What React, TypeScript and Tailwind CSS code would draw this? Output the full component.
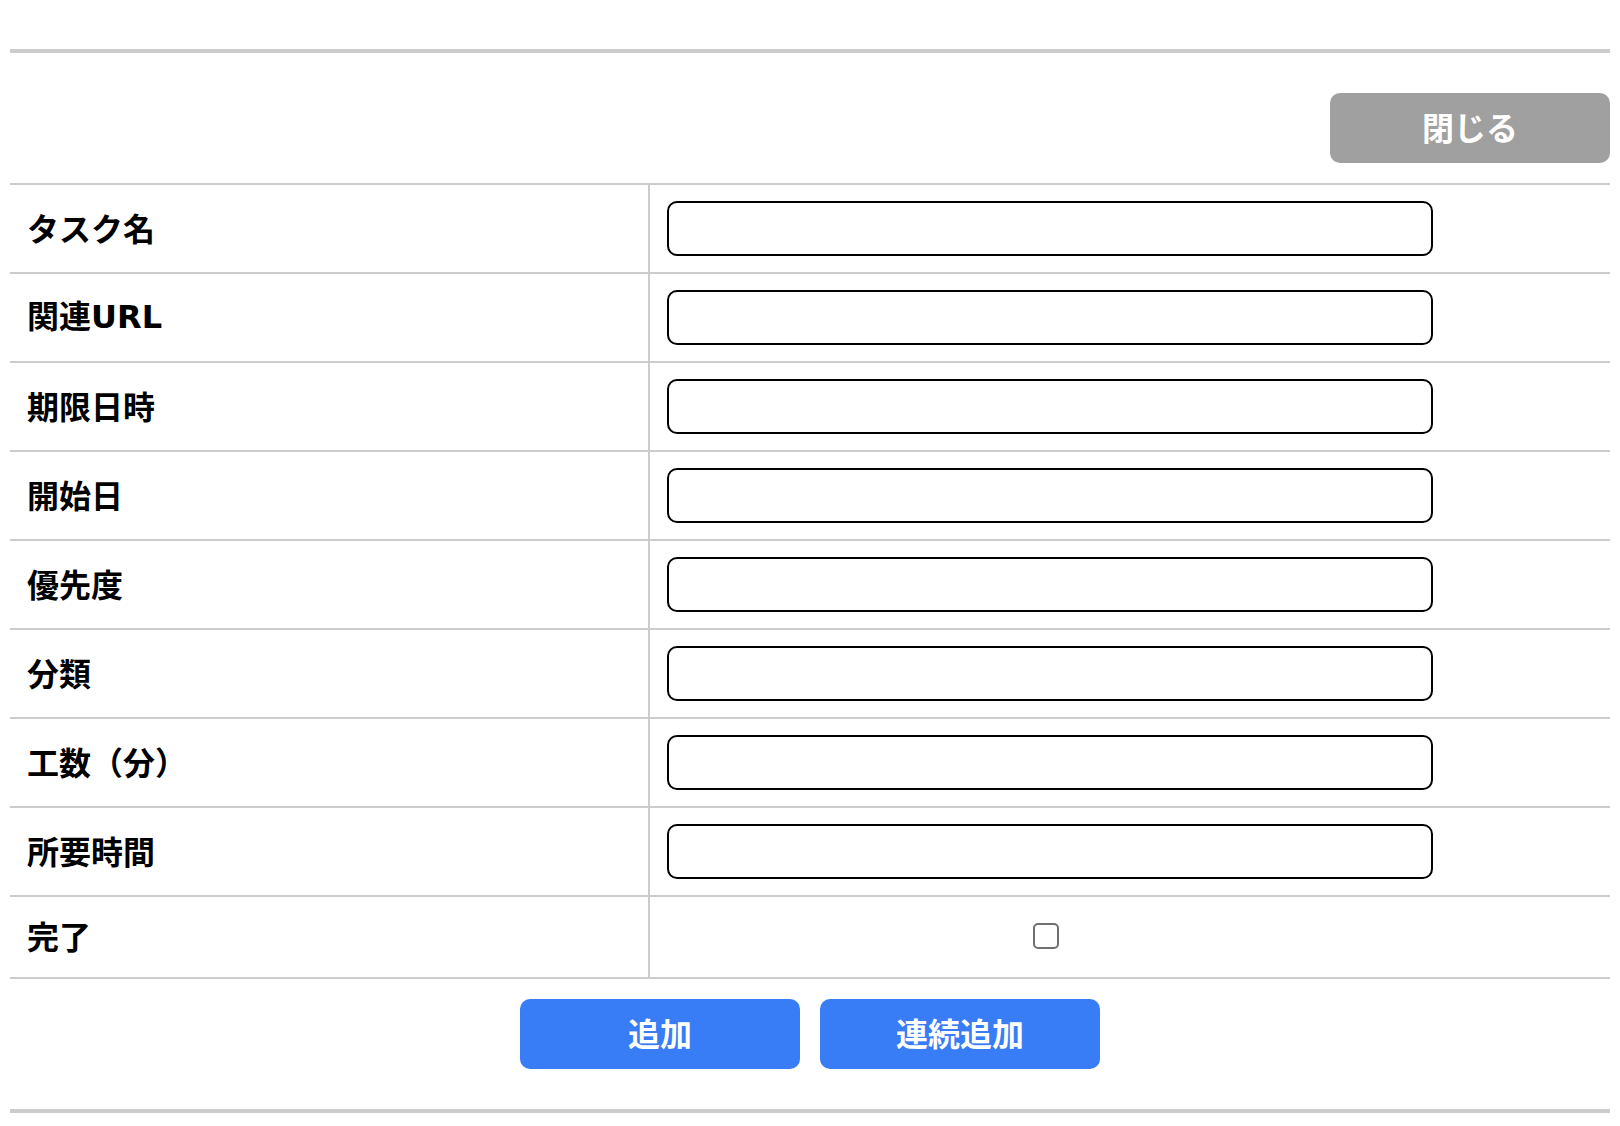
import { FC, ReactNode } from 'react'

const fields: ReactNode[] = [
    'タスク名',
    <>
        関連<span style={{ fontFamily: '"DejaVu Sans", "Noto Sans CJK JP", sans-serif' }}>URL</span>
    </>,
    '期限日時',
    '開始日',
    '優先度',
    '分類',
    '工数（分）',
    '所要時間',
]

const FieldRow: FC<{ label: ReactNode }> = ({ label }) => {
    return (
        <div className="flex h-[89px] border-b-2 border-[#cccccc]">
            <div className="flex w-[640px] shrink-0 items-center border-r-2 border-[#cccccc] pb-[4px] pl-[17px]">
                <span className="text-[32px] font-bold text-black">{label}</span>
            </div>
            <div className="flex flex-1 items-center pl-[17px]">
                <input
                    type="text"
                    className="h-[55px] w-[766px] rounded-[10px] border-2 border-black bg-white px-3 text-[28px] outline-none"
                />
            </div>
        </div>
    )
}

const App: FC = () => {
    return (
        <div
            className="min-h-[1126px] bg-white px-[10px] pt-[49px]"
            style={{ fontFamily: '"Noto Sans CJK JP", "Noto Sans", sans-serif' }}
        >
            <div className="h-[4px] bg-[#cccccc]" />

            <div className="mt-[40px] flex justify-end">
                <button className="h-[70px] w-[280px] rounded-[10px] bg-[#a0a0a0] pb-[4px] text-[32px] font-bold text-white">
                    閉じる
                </button>
            </div>

            {/* form table */}
            <div className="mt-[20px] border-t-2 border-[#cccccc]">
                {fields.map((f, i) => (
                    <FieldRow key={i} label={f} />
                ))}
                <div className="flex h-[82px] border-b-2 border-[#cccccc]">
                    <div className="flex w-[640px] shrink-0 items-center border-r-2 border-[#cccccc] pb-[4px] pl-[17px]">
                        <span className="text-[32px] font-bold text-black">完了</span>
                    </div>
                    <div className="flex flex-1 items-center pb-[3px] pl-[17px]">
                        <div className="flex w-[758px] justify-center">
                            <input
                                type="checkbox"
                                className="h-[26px] w-[26px] appearance-none rounded-[5px] border-2 border-[#707070] bg-white"
                            />
                        </div>
                    </div>
                </div>
            </div>

            <div className="mt-[20px] flex justify-center gap-[20px]">
                <button className="h-[70px] w-[280px] rounded-[10px] bg-[#387cf6] pb-[4px] text-[32px] font-bold text-white">
                    追加
                </button>
                <button className="h-[70px] w-[280px] rounded-[10px] bg-[#387cf6] pb-[4px] text-[32px] font-bold text-white">
                    連続追加
                </button>
            </div>

            <div className="mt-[40px] h-[4px] bg-[#cccccc]" />
        </div>
    )
}

export default App
